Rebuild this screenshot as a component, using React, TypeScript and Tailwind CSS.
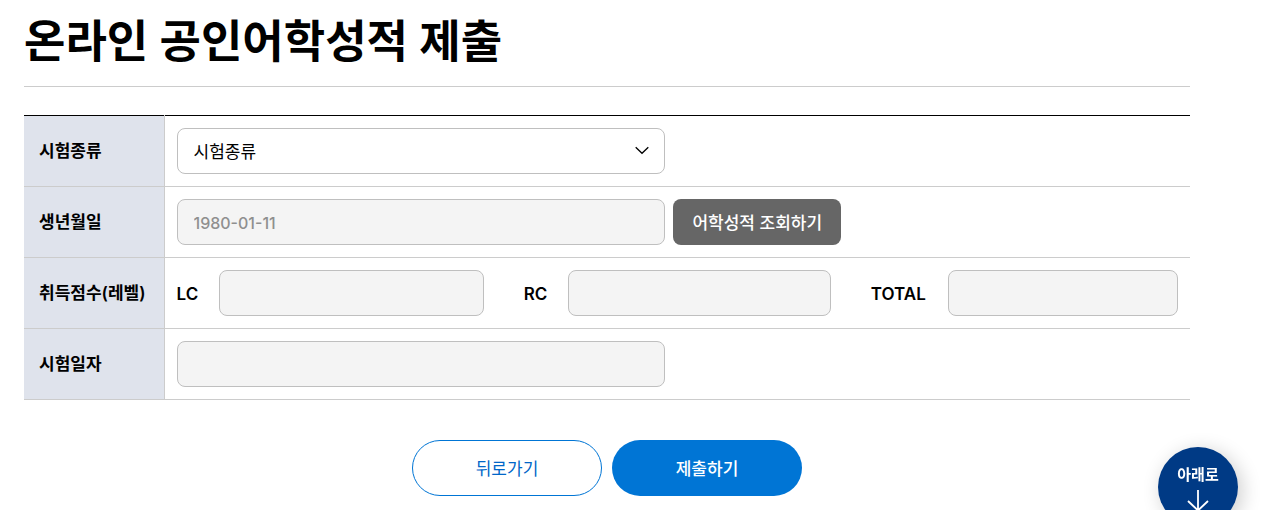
import type { ReactNode } from 'react';

const field =
  'h-[46px] rounded-lg border border-[#bfbfbf] bg-[#f4f4f4] px-4 pt-[2px] text-base font-medium text-[#8f8f8f] outline-none';

function Row({ label, htmlFor, children }: { label: string; htmlFor: string; children: ReactNode }) {
  return (
    <tr className="border-b border-[#cccccc]">
      <th scope="row" className="w-[140px] border-r border-[#cccccc] bg-[#dfe3ec] pt-[2px] pl-[15px] text-left text-[17px] font-semibold whitespace-nowrap">
        <label htmlFor={htmlFor}>{label}</label>
      </th>
      <td className="p-3">{children}</td>
    </tr>
  );
}

export default function App() {
  return (
    <div className="h-screen overflow-hidden bg-white font-['Inter','Noto_Sans_CJK_KR',sans-serif] text-black">
      <main className="mr-[73px] ml-6">
        <h1 className="border-b border-[#cccccc] pt-[10px] pb-3 text-[45px] leading-[64px] font-semibold">
          온라인 공인어학성적 제출
        </h1>
        <form className="mt-7" onSubmit={(e) => e.preventDefault()}>
          <table className="w-full table-fixed border-collapse border-t border-black">
            <tbody>
              <Row label="시험종류" htmlFor="exam">
                <div className="relative w-[calc(50%-12px)]">
                  <select id="exam" className="h-[46px] w-full appearance-none rounded-lg border border-[#bfbfbf] bg-white px-4 pt-1 text-[17px]">
                    <option>시험종류</option>
                  </select>
                  <svg className="pointer-events-none absolute top-4 right-4" width="14" height="14" viewBox="0 0 14 14" fill="none" stroke="#000" strokeWidth="1.3">
                    <path d="M.7 3.3L7 9.3l6.3-6" />
                  </svg>
                </div>
              </Row>
              <Row label="생년월일" htmlFor="birth">
                <div className="flex gap-2">
                  <input id="birth" disabled defaultValue="1980-01-11" className={`${field} w-[calc(50%-12px)]`} />
                  <button type="button" className="h-[46px] w-[168px] rounded-lg bg-[#666666] pt-1 text-[17px] font-medium text-white">어학성적 조회하기</button>
                </div>
              </Row>
              <Row label="취득점수(레벨)" htmlFor="lc">
                <div className="grid grid-cols-[42px_265fr_84px_263fr_117px_230fr] items-center text-[17px] font-semibold">
                  <label htmlFor="lc" className="pt-1">LC</label>
                  <input id="lc" disabled className={`${field} w-full`} />
                  <label htmlFor="rc" className="pt-1 pl-10">RC</label>
                  <input id="rc" disabled className={`${field} w-full`} />
                  <label htmlFor="total" className="pt-1 pl-10">TOTAL</label>
                  <input id="total" disabled className={`${field} w-full`} />
                </div>
              </Row>
              <Row label="시험일자" htmlFor="date">
                <input id="date" disabled className={`${field} block w-[calc(50%-12px)]`} />
              </Row>
            </tbody>
          </table>
          <div className="mt-10 flex justify-center gap-[10px] text-[17px]">
            <button type="button" className="h-14 w-[190px] rounded-full border border-[#0075d5] pt-1 text-[#0066c8]">뒤로가기</button>
            <button type="submit" className="h-14 w-[190px] rounded-full bg-[#0075d5] pt-1 font-medium text-white">제출하기</button>
          </div>
        </form>
      </main>
      <button type="button" className="fixed right-[25px] -bottom-[17px] flex size-20 flex-col items-center rounded-full bg-[#003a85] pt-4 text-[15px] leading-6 font-bold text-white shadow-[4px_4px_20px_rgba(0,0,0,0.2)]">
        아래로
        <svg width="22" height="24" viewBox="0 0 22 24" fill="none" stroke="#fff" strokeWidth="1.8" className="mt-[3px]">
          <path d="M11 0v20M1 11l10 9.500 10-9.500" />
        </svg>
      </button>
    </div>
  );
}
